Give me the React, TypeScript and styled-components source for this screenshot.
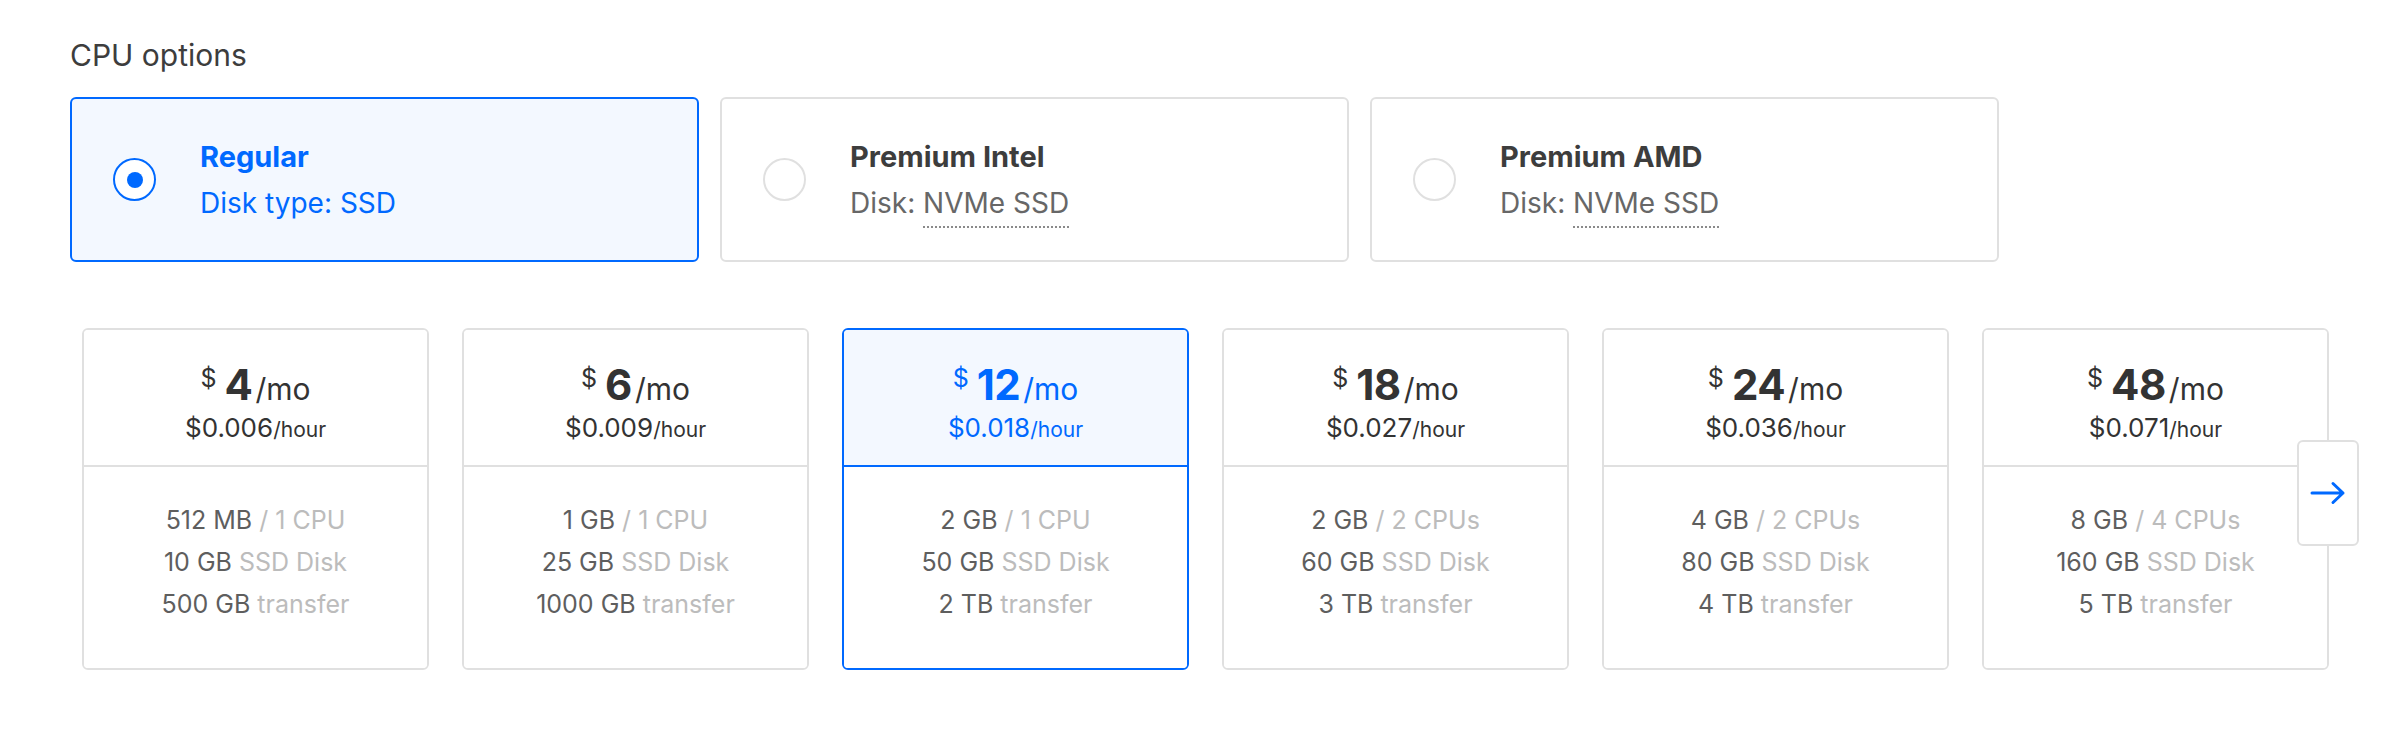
import React from "react";
import styled, { createGlobalStyle, css } from "styled-components";

type CpuOption = {
  name: string;
  label: string;
  value: string;
  underlined?: boolean;
};

type Plan = {
  price: string;
  hourly: string;
  memory: string;
  cpu: string;
  disk: string;
  transfer: string;
};

const cpuOptions: CpuOption[] = [
  { name: "Regular", label: "Disk type:", value: "SSD" },
  { name: "Premium Intel", label: "Disk:", value: "NVMe SSD", underlined: true },
  { name: "Premium AMD", label: "Disk:", value: "NVMe SSD", underlined: true },
];

const plans: Plan[] = [
  { price: "4", hourly: "$0.006", memory: "512 MB", cpu: "1 CPU", disk: "10 GB", transfer: "500 GB" },
  { price: "6", hourly: "$0.009", memory: "1 GB", cpu: "1 CPU", disk: "25 GB", transfer: "1000 GB" },
  { price: "12", hourly: "$0.018", memory: "2 GB", cpu: "1 CPU", disk: "50 GB", transfer: "2 TB" },
  { price: "18", hourly: "$0.027", memory: "2 GB", cpu: "2 CPUs", disk: "60 GB", transfer: "3 TB" },
  { price: "24", hourly: "$0.036", memory: "4 GB", cpu: "2 CPUs", disk: "80 GB", transfer: "4 TB" },
  { price: "48", hourly: "$0.071", memory: "8 GB", cpu: "4 CPUs", disk: "160 GB", transfer: "5 TB" },
];

const App = () => {
  const selectedCpu = 0;
  const selectedPlan = 2;

  return (
    <>
      <GlobalStyle />
      <Page>
        <Heading>CPU options</Heading>
        <CpuRow>
          {cpuOptions.map((opt, i) => (
            <CpuCard key={opt.name} $active={i === selectedCpu}>
              <Radio $active={i === selectedCpu} />
              <CpuText>
                <CpuName $active={i === selectedCpu}>{opt.name}</CpuName>
                <CpuDisk $active={i === selectedCpu}>
                  {opt.label}{" "}
                  {opt.underlined ? <Dotted>{opt.value}</Dotted> : opt.value}
                </CpuDisk>
              </CpuText>
            </CpuCard>
          ))}
        </CpuRow>

        <PlanRow>
          {plans.map((plan, i) => (
            <PlanCard key={plan.price} $active={i === selectedPlan}>
              <PlanHead $active={i === selectedPlan}>
                <Monthly>
                  <Dollar>$</Dollar>
                  <Amount>{plan.price}</Amount>
                  <Per>/mo</Per>
                </Monthly>
                <Hourly>
                  {plan.hourly}
                  <small>/hour</small>
                </Hourly>
              </PlanHead>
              <PlanBody>
                <Spec>
                  {plan.memory} <span>/ {plan.cpu}</span>
                </Spec>
                <Spec>
                  {plan.disk} <span>SSD Disk</span>
                </Spec>
                <Spec>
                  {plan.transfer} <span>transfer</span>
                </Spec>
              </PlanBody>
            </PlanCard>
          ))}
          <NextButton aria-label="Next">
            <svg width="36" height="24" viewBox="0 0 36 24" fill="none">
              <path
                d="M2 12H33M23 2.5L33 12L23 21.5"
                stroke="#0069ff"
                strokeWidth="3"
                strokeLinecap="round"
                strokeLinejoin="round"
              />
            </svg>
          </NextButton>
        </PlanRow>
      </Page>
    </>
  );
};

const GlobalStyle = createGlobalStyle`
  body {
    margin: 0;
    background: #fff;
    font-family: Inter, "Open Sans", sans-serif;
    color: #333;
  }
`;

const Page = styled.div`
  padding: 38px 0 0 70px;
`;

const Heading = styled.h3`
  margin: 0 0 24px;
  font-size: 30px;
  line-height: 35px;
  font-weight: 400;
  color: #3d3d3d;
`;

const CpuRow = styled.div`
  display: grid;
  grid-template-columns: repeat(3, 629px);
  gap: 21px;
`;

const CpuCard = styled.div<{ $active?: boolean }>`
  box-sizing: border-box;
  height: 165px;
  display: flex;
  align-items: center;
  padding-left: 41px;
  border: 2px solid #e0e0e0;
  border-radius: 6px;
  background: #fff;

  ${(p) =>
    p.$active &&
    css`
      border-color: #0069ff;
      background: #f3f8ff;
    `}
`;

const Radio = styled.span<{ $active?: boolean }>`
  box-sizing: border-box;
  width: 43px;
  height: 43px;
  flex-shrink: 0;
  border-radius: 50%;
  border: 2px solid ${(p) => (p.$active ? "#0069ff" : "#e0e0e0")};
  background: #fff;
  display: flex;
  align-items: center;
  justify-content: center;

  &::after {
    content: "";
    width: 16px;
    height: 16px;
    border-radius: 50%;
    background: #0069ff;
    display: ${(p) => (p.$active ? "block" : "none")};
  }
`;

const CpuText = styled.div`
  margin-left: 44px;
`;

const CpuName = styled.div<{ $active?: boolean }>`
  font-size: 29px;
  line-height: 36px;
  font-weight: 700;
  color: ${(p) => (p.$active ? "#0069ff" : "#3d3d3d")};
`;

const CpuDisk = styled.div<{ $active?: boolean }>`
  margin-top: 10px;
  font-size: 28px;
  line-height: 36px;
  color: ${(p) => (p.$active ? "#0069ff" : "#676767")};
`;

const Dotted = styled.span`
  padding-bottom: 6px;
  border-bottom: 2px dotted #8a8a8a;
`;

const PlanRow = styled.div`
  position: relative;
  margin-top: 66px;
  padding-left: 12px;
  display: grid;
  grid-template-columns: repeat(6, 347px);
  gap: 33px;
  width: max-content;
`;

const PlanCard = styled.div<{ $active?: boolean }>`
  box-sizing: border-box;
  height: 342px;
  border: 2px solid ${(p) => (p.$active ? "#0069ff" : "#e0e0e0")};
  border-radius: 6px;
  overflow: hidden;
  display: flex;
  flex-direction: column;
  text-align: center;
`;

const PlanHead = styled.div<{ $active?: boolean }>`
  height: 137px;
  padding-top: 39px;
  box-sizing: border-box;
  border-bottom: 2px solid ${(p) => (p.$active ? "#0069ff" : "#e0e0e0")};
  background: ${(p) => (p.$active ? "#f3f8ff" : "#fff")};
  color: ${(p) => (p.$active ? "#0069ff" : "#333")};
`;

const Monthly = styled.div`
  font-size: 0;
  line-height: 32px;
  white-space: nowrap;
`;

const Dollar = styled.span`
  font-size: 25px;
  line-height: 0;
  vertical-align: 13px;
  margin-right: 8px;
`;

const Amount = styled.span`
  font-size: 42px;
  font-weight: 700;
  letter-spacing: -0.5px;
`;

const Per = styled.span`
  font-size: 30px;
  line-height: 0;
  margin-left: 3px;
`;

const Hourly = styled.div`
  font-size: 26px;
  line-height: 24px;

  small {
    font-size: 21px;
  }
`;

const PlanBody = styled.div`
  flex: 1;
  padding-top: 32px;
  background: #fff;
`;

const Spec = styled.div`
  font-size: 25px;
  line-height: 42px;
  color: #5e5e5e;

  span {
    color: #bcbcbc;
  }
`;

const NextButton = styled.button`
  position: absolute;
  top: 112px;
  right: -30px;
  width: 62px;
  height: 106px;
  box-sizing: border-box;
  padding: 0;
  border: 2px solid #e0e0e0;
  border-radius: 6px;
  background: #fff;
  display: flex;
  align-items: center;
  justify-content: center;
  cursor: pointer;
`;

export default App;
